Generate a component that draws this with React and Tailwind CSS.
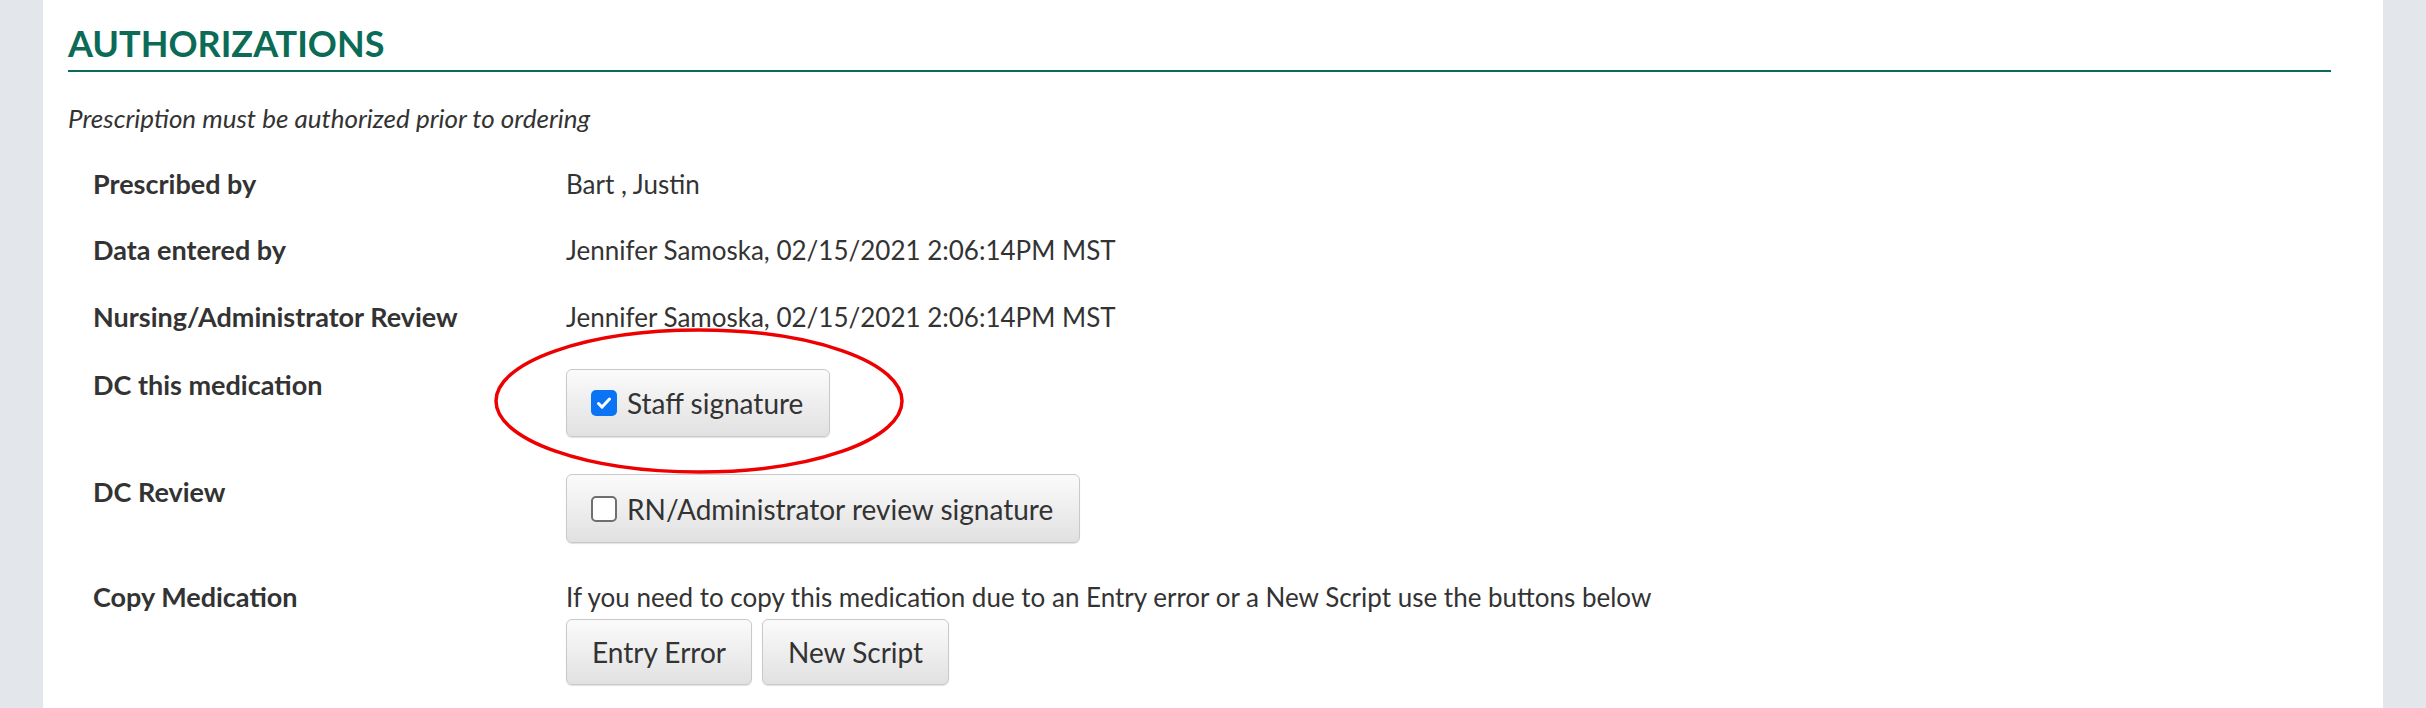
import React from "react";

const Check = ({ checked }) =>
  checked ? (
    <span className="w-[26px] h-[26px] rounded-[5px] bg-[#0b74f5] flex items-center justify-center shrink-0">
      <svg width="18" height="18" viewBox="0 0 18 18">
        <path d="M3.5 9.5l3.6 3.6L14.5 5" fill="none" stroke="#fff" strokeWidth="3" strokeLinecap="round" strokeLinejoin="round" />
      </svg>
    </span>
  ) : (
    <span className="w-[26px] h-[26px] rounded-[5px] bg-white border-2 border-[#6f6f6f] shrink-0" />
  );

const Btn = ({ children, className = "" }) => (
  <button
    className={
      "flex items-center rounded-[6px] border border-[#c9c9c9] bg-gradient-to-b from-[#fbfbfb] to-[#e1e1e1] shadow-[0_1px_1px_rgba(0,0,0,0.12)] text-[28px] text-[#333] leading-[36px] " +
      className
    }
  >
    {children}
  </button>
);

const Row = ({ label, children, className = "" }) => (
  <div className={"grid grid-cols-[498px_1fr] " + className}>
    <div className="pl-[25px] font-bold text-[27px] leading-[36px] text-[#333]">{label}</div>
    <div className="text-[26px] leading-[36px] text-[#333]">{children}</div>
  </div>
);

export default function App() {
  return (
    <div className="relative flex h-[708px] bg-[#e3e6eb] px-[43px] font-[Lato,sans-serif] overflow-hidden">
      <div className="flex-1 bg-white pl-[25px] pr-[52px]">
        <h2 className="mt-[23px] pb-[7px] border-b-2 border-[#0b6b57] text-[36px] leading-[40px] font-bold text-[#0b6b57]">
          AUTHORIZATIONS
        </h2>
        <p className="mt-[28px] italic text-[26px] leading-[36px] text-[#333]">
          Prescription must be authorized prior to ordering
        </p>

        <div className="mt-[30px] flex flex-col">
          <Row label="Prescribed by">Bart , Justin</Row>
          <Row label="Data entered by" className="mt-[30px]">
            Jennifer Samoska, 02/15/2021 2:06:14PM MST
          </Row>
          <Row label="Nursing/Administrator Review" className="mt-[31px]">
            Jennifer Samoska, 02/15/2021 2:06:14PM MST
          </Row>
          <Row label="DC this medication" className="mt-[32px]">
            <div className="pt-[2px]">
              <Btn className="h-[68px] pl-[24px] pr-[26px] gap-[10px]">
                <Check checked />
                Staff signature
              </Btn>
            </div>
          </Row>
          <Row label="DC Review" className="mt-[37px]">
            <Btn className="h-[69px] pl-[24px] pr-[26px] gap-[10px]">
              <Check />
              RN/Administrator review signature
            </Btn>
          </Row>
          <Row label="Copy Medication" className="mt-[36px]">
            <div>
              If you need to copy this medication due to an Entry error or a New Script use the buttons below
            </div>
            <div className="mt-[4px] flex gap-[10px]">
              <Btn className="h-[66px] px-[25px]">Entry Error</Btn>
              <Btn className="h-[66px] px-[25px]">New Script</Btn>
            </div>
          </Row>
        </div>
      </div>

      <svg className="absolute left-[493px] top-[328px]" width="412" height="148" viewBox="0 0 412 148">
        <ellipse cx="206" cy="73" rx="203" ry="71" fill="none" stroke="#ee0000" strokeWidth="3.5" />
      </svg>
    </div>
  );
}
